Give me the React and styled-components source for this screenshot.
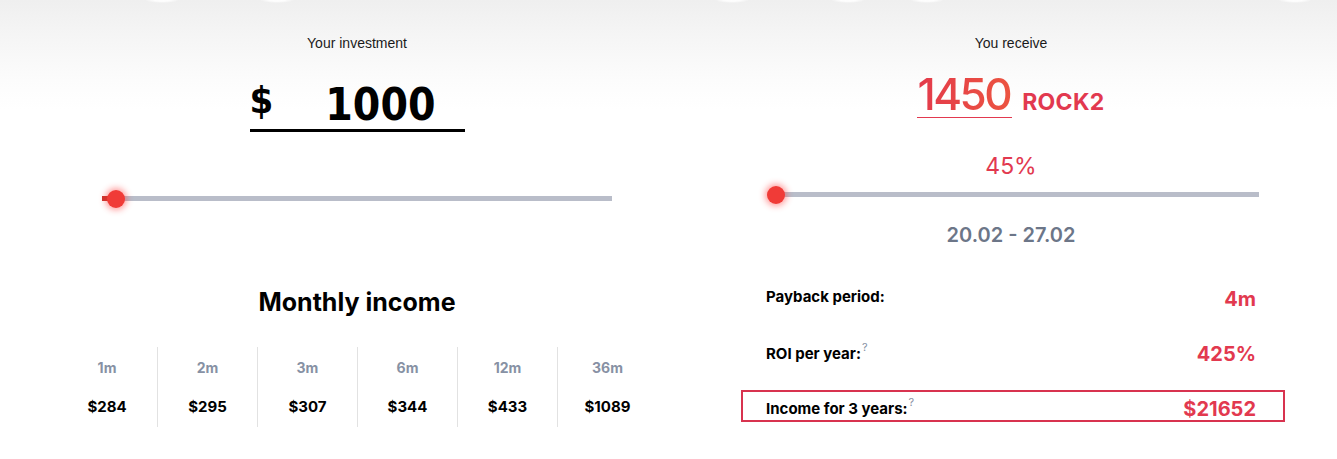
import React from 'react'
import styled, { createGlobalStyle } from 'styled-components';

const GlobalStyle = createGlobalStyle`
    html, body {
        margin: 0;
        padding: 0;
        background: #fff;
    }
    body {
        font-family: Inter, "Open Sans", sans-serif;
        color: #111;
    }
`;

const RED = '#e2394f';
const GREY = '#8791a4';

const bumps = [162, 277, 732, 848, 927, 1295]
    .map(x => `radial-gradient(ellipse 17px 3px at ${x}px 0, rgba(255,255,255,0.9) 45%, rgba(255,255,255,0) 100%)`)
    .join(', ');

const months = [
    { label: '1m', value: '$284' },
    { label: '2m', value: '$295' },
    { label: '3m', value: '$307' },
    { label: '6m', value: '$344' },
    { label: '12m', value: '$433' },
    { label: '36m', value: '$1089' },
];

const stats = [
    { label: 'Payback period:', value: '4m', hint: false, boxed: false },
    { label: 'ROI per year:', value: '425%', hint: true, boxed: false },
    { label: 'Income for 3 years:', value: '$21652', hint: true, boxed: true },
];

export default function App() {
    return (
        <>
            <GlobalStyle />
            <Page>

                <Column>
                    <Caption>Your investment</Caption>

                    <AmountField>
                        <Currency>$</Currency>
                        <AmountValue>1000</AmountValue>
                    </AmountField>

                    <Slider $width={510} $top={64} $shift={0}>
                        <SliderFill />
                        <Thumb $at={14} />
                    </Slider>

                    <Title>Monthly income</Title>

                    <MonthGrid>
                        {months.map(m => (
                            <MonthCell key={m.label}>
                                <MonthLabel>{m.label}</MonthLabel>
                                <MonthValue>{m.value}</MonthValue>
                            </MonthCell>
                        ))}
                    </MonthGrid>
                </Column>

                <Column>
                    <Caption>You receive</Caption>

                    <ReceiveRow>
                        <ReceiveValue>1450</ReceiveValue>
                        <Token>ROCK2</Token>
                    </ReceiveRow>

                    <Percent>45%</Percent>

                    <Slider $width={483} $top={12} $shift={12}>
                        <Thumb $at={0} />
                    </Slider>

                    <Dates>20.02 - 27.02</Dates>

                    <StatList>
                        {stats.map(s => (
                            <StatRow key={s.label} $boxed={s.boxed}>
                                <StatLabel>
                                    {s.label}
                                    {s.hint && <Hint>?</Hint>}
                                </StatLabel>
                                <StatValue>{s.value}</StatValue>
                            </StatRow>
                        ))}
                    </StatList>
                </Column>

            </Page>
        </>
    )
}

const Page = styled.div`
    width: 1337px;
    height: 459px;
    box-sizing: border-box;
    padding-left: 57px;
    display: grid;
    grid-template-columns: 600px 600px;
    column-gap: 54px;
    background-color: #fff;
    background-image: ${bumps}, linear-gradient(180deg, #efefef 0px, #f5f5f5 35px, #fcfcfc 80px, #fff 110px);
    overflow: hidden;
`;

const Column = styled.div`
    display: flex;
    flex-direction: column;
    align-items: center;
`;

const Caption = styled.div`
    margin-top: 35px;
    font-family: "Liberation Sans", Arial, sans-serif;
    font-size: 14px;
    line-height: 16px;
    color: #1a1a1a;
`;

const AmountField = styled.div`
    margin-top: 24px;
    width: 215px;
    height: 54px;
    display: flex;
    align-items: flex-end;
    border-bottom: 3px solid #000;
    font-family: "DejaVu Sans Condensed", "DejaVu Sans", sans-serif;
    font-stretch: condensed;
    font-weight: 700;
    color: #000;
`;

const Currency = styled.span`
    font-size: 38px;
    line-height: 38px;
    align-self: flex-start;
    margin-top: 6px;
`;

const AmountValue = styled.span`
    margin-left: 52px;
    font-size: 44px;
    line-height: 44px;
    margin-bottom: 2px;
`;

const Slider = styled.div`
    position: relative;
    margin-top: ${p => p.$top}px;
    margin-left: ${p => p.$shift}px;
    width: ${p => p.$width}px;
    height: 5px;
    background: #b9bdc9;
`;

const SliderFill = styled.div`
    width: 14px;
    height: 100%;
    background: #c8362f;
`;

const Thumb = styled.div`
    position: absolute;
    top: 50%;
    left: ${p => p.$at}px;
    width: 18px;
    height: 18px;
    margin: -9px 0 0 -9px;
    border-radius: 50%;
    background: #f03b37;
    box-shadow: 0 0 6px 2px rgba(255, 40, 40, 0.45);
`;

const Title = styled.h2`
    margin: 86px 0 0;
    font-size: 25px;
    line-height: 30px;
    font-weight: 700;
    color: #000;
`;

const MonthGrid = styled.div`
    margin-top: 30px;
    width: 600px;
    display: grid;
    grid-template-columns: repeat(6, 1fr);
`;

const MonthCell = styled.div`
    height: 80px;
    display: flex;
    flex-direction: column;
    align-items: center;
    & + & {
        border-left: 1px solid #e2e2e2;
    }
`;

const MonthLabel = styled.div`
    margin-top: 13px;
    font-size: 14px;
    line-height: 16px;
    font-weight: 700;
    color: ${GREY};
`;

const MonthValue = styled.div`
    margin-top: 22px;
    font-size: 15px;
    line-height: 18px;
    font-weight: 700;
    color: #000;
`;

const ReceiveRow = styled.div`
    margin-top: 20px;
    display: flex;
    align-items: baseline;
    gap: 10px;
`;

const ReceiveValue = styled.span`
    font-size: 44px;
    line-height: 46px;
    font-weight: 500;
    letter-spacing: -2.5px;
    padding-right: 2px;
    background: linear-gradient(90deg, #e33a4b, #ec5440);
    -webkit-background-clip: text;
    background-clip: text;
    color: transparent;
    border-bottom: 1px solid ${RED};
`;

const Token = styled.span`
    font-size: 23px;
    font-weight: 700;
    letter-spacing: 0.3px;
    color: ${RED};
`;

const Percent = styled.div`
    margin-top: 34px;
    font-size: 23px;
    line-height: 28px;
    font-weight: 400;
    color: ${RED};
`;

const Dates = styled.div`
    margin-top: 26px;
    font-size: 20px;
    line-height: 24px;
    font-weight: 600;
    color: #6c7688;
`;

const StatList = styled.div`
    margin-top: 33px;
    margin-left: 4px;
    width: 544px;
    display: flex;
    flex-direction: column;
    gap: 23px;
`;

const StatRow = styled.div`
    height: 32px;
    box-sizing: border-box;
    padding: 0 27px 0 23px;
    display: flex;
    align-items: center;
    justify-content: space-between;
    border: 2px solid ${p => p.$boxed ? '#d8334f' : 'transparent'};
`;

const StatLabel = styled.div`
    font-size: 15px;
    font-weight: 700;
    color: #000;
`;

const Hint = styled.sup`
    margin-left: 1px;
    font-size: 11px;
    font-weight: 400;
    color: ${GREY};
    vertical-align: 8px;
`;

const StatValue = styled.div`
    margin-top: 5px;
    font-size: 20px;
    font-weight: 700;
    color: ${RED};
`;
